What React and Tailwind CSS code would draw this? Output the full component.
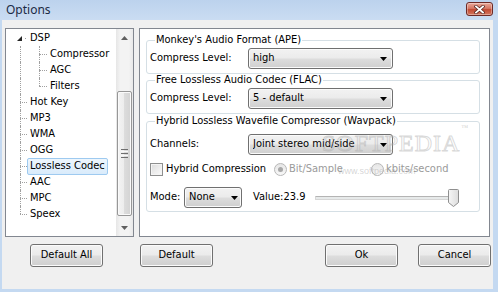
import React from "react";

const F = "font-['DejaVu_Sans_Condensed','Liberation_Sans',sans-serif]";

function Down({ w = 7, h = 4, color = "#000" }) {
  return (
    <svg width={w} height={h} viewBox={`0 0 ${w} ${h}`} className="block">
      <polygon points={`0,0 ${w},0 ${w / 2},${h}`} fill={color} />
    </svg>
  );
}
function Up({ w = 7, h = 4, color = "#000" }) {
  return (
    <svg width={w} height={h} viewBox={`0 0 ${w} ${h}`} className="block">
      <polygon points={`0,${h} ${w},${h} ${w / 2},0`} fill={color} />
    </svg>
  );
}

const btnBg =
  "bg-[linear-gradient(to_bottom,#f2f2f2_0%,#ebebeb_48%,#dddddd_52%,#cfcfcf_100%)]";

function Btn({ children, className = "" }) {
  return (
    <div
      className={`h-[23px] w-[73px] flex items-center justify-center rounded-[3px] border border-[#707070] ${btnBg} shadow-[inset_0_0_0_1px_#fbfbfb] ${className}`}
    >
      {children}
    </div>
  );
}

function Combo({ text, className = "", tri = "mr-[5px]" }) {
  return (
    <div
      className={`h-[21px] flex items-center rounded-[3px] border border-[#707070] ${btnBg} shadow-[inset_0_0_0_1px_#fbfbfb] pl-[4px] ${className}`}
    >
      <span className="truncate">{text}</span>
      <span className={`ml-auto ${tri}`}>
        <Down />
      </span>
    </div>
  );
}

const dot = "border-dotted border-[#a0a0a0]";

function Label({ text, selected }) {
  return (
    <span
      className={`h-[17px] flex items-center px-[2px] border rounded-[2px] whitespace-nowrap ${
        selected
          ? "border-[#9ecaf0] bg-[linear-gradient(to_bottom,#eef6fd,#d9ebfb)]"
          : "border-transparent"
      }`}
    >
      {text}
    </span>
  );
}

function Connector({ w, last, className = "" }) {
  return (
    <div className={`flex flex-col h-[16px] ${className}`} style={{ width: w }}>
      <div className={`h-[8px] border-l ${dot}`} />
      <div className={`h-[8px] border-t ${last ? "" : "border-l"} ${dot}`} />
    </div>
  );
}

function Tree() {
  const top = [
    { t: "Hot Key" },
    { t: "MP3" },
    { t: "WMA" },
    { t: "OGG" },
    { t: "Lossless Codec", sel: true },
    { t: "AAC" },
    { t: "MPC" },
    { t: "Speex", last: true },
  ];
  const kids = ["Compressor", "AGC", "Filters"];
  return (
    <div className="flex-1 flex flex-col pt-[1px]">
      <div className="h-[16px] flex items-center pl-[11px]">
        <svg width="5" height="5" viewBox="0 0 5 5" className="block">
          <polygon points="5,0 5,5 0,5" fill="#262626" />
        </svg>
        <div className="w-[5px] flex justify-end pr-[1px]">
          <div className="w-[1px] h-[1px] bg-[#a0a0a0]" />
        </div>
        <Label text="DSP" />
      </div>
      {kids.map((k, i) => (
        <div key={k} className="h-[16px] flex items-center pl-[14px]">
          <div className={`w-[19px] h-[16px] border-l ${dot}`} />
          <Connector w={8} last={i === kids.length - 1} />
          <Label text={k} />
        </div>
      ))}
      {top.map((r) => (
        <div key={r.t} className="h-[16px] flex items-center pl-[14px]">
          <Connector w={7} last={r.last} />
          <Label text={r.t} selected={r.sel} />
        </div>
      ))}
    </div>
  );
}

function Scrollbar() {
  return (
    <div className="w-[17px] flex flex-col bg-[linear-gradient(to_right,#e6e6e6,#f3f3f3_25%,#f3f3f3_75%,#e9e9e9)]">
      <div className="h-[17px] flex items-center justify-center">
        <Up w={7} h={4} color="#606060" />
      </div>
      <div className="mt-[45px] mx-[1px] h-[125px] rounded-[2px] border border-[#979797] bg-[linear-gradient(to_right,#f4f4f4,#ececec_50%,#dcdcdc_50%,#d3d3d3)] shadow-[inset_0_0_0_1px_#fafafa] flex flex-col items-center justify-center gap-[1px]">
        <div className="w-[7px] h-[1px] bg-[#6f6f6f]" />
        <div className="w-[7px] h-[1px] bg-[#f8f8f8]" />
        <div className="w-[7px] h-[1px] bg-[#6f6f6f]" />
        <div className="w-[7px] h-[1px] bg-[#f8f8f8]" />
        <div className="w-[7px] h-[1px] bg-[#6f6f6f]" />
      </div>
      <div className="mt-auto h-[17px] flex items-center justify-center">
        <Down w={7} h={4} color="#606060" />
      </div>
    </div>
  );
}

function Group({ title, children, className = "" }) {
  return (
    <fieldset
      className={`w-[334px] ml-[6px] border border-[#d5dfe5] rounded-[3px] px-[3px] ${className}`}
    >
      <legend className="ml-[5px] px-[1px] h-[12px] leading-[12px]">{title}</legend>
      {children}
    </fieldset>
  );
}

function Radio({ checked }) {
  return (
    <div className="w-[13px] h-[13px] rounded-full border border-[#b8b8b8] bg-[linear-gradient(to_bottom,#e6e6e6,#f8f8f8)] flex items-center justify-center">
      {checked && <div className="w-[5px] h-[5px] rounded-full bg-[#a8a8a8]" />}
    </div>
  );
}

export default function App() {
  return (
    <div
      className={`relative w-[498px] h-[292px] flex flex-col bg-[#c4d9f1] text-[11px] text-black ${F} overflow-hidden`}
    >
      {/* title bar */}
      <div className="h-[20px] flex items-start bg-[linear-gradient(to_bottom,#bcd2ed,#cadcf2)]">
        <span className="ml-[6px] mt-[1px] text-[12px] leading-[18px] font-['Noto_Sans',sans-serif] text-[#1b2a44]">
          Options
        </span>
        <div className="ml-auto mr-[5px] mt-[2px] w-[27px] h-[14px] rounded-[3px] border border-[#6d2a26] bg-[linear-gradient(to_bottom,#e9a99b,#d57764_45%,#c24a33_55%,#d4785f)] flex items-center justify-center shadow-[inset_0_0_0_1px_rgba(255,255,255,0.35)]">
          <svg width="11" height="9" viewBox="0 0 11 9" className="block">
            <path d="M2 1.5 L9 7.5 M9 1.5 L2 7.5" stroke="#5a2a24" strokeWidth="3.4" strokeLinecap="square" />
            <path d="M2 1.5 L9 7.5 M9 1.5 L2 7.5" stroke="#ffffff" strokeWidth="1.8" strokeLinecap="square" />
          </svg>
        </div>
      </div>

      {/* body */}
      <div className="flex-1 ml-[2px] mr-[5px] mb-[3px] bg-[#f0f0f0] flex flex-col pt-[8px] pl-[3px]">
        <div className="flex h-[209px] gap-[5px]">
          <div className="w-[129px] h-[209px] border border-[#828790] bg-white flex">
            <Tree />
            <Scrollbar />
          </div>
          <div className="w-[351px] h-[209px] border border-[#828790] bg-white flex flex-col">
            <Group title="Monkey's Audio Format (APE)" className="mt-[5px] pb-[4px]">
              <div className="mt-[2px] flex items-center">
                <span className="w-[98px]">Compress Level:</span>
                <Combo text="high" className="w-[145px]" />
              </div>
            </Group>
            <Group title="Free Lossless Audio Codec (FLAC)" className="pb-[4px]">
              <div className="mt-[2px] flex items-center">
                <span className="w-[98px]">Compress Level:</span>
                <Combo text="5 - default" className="w-[145px]" />
              </div>
            </Group>
            <Group
              title="Hybrid Lossless Wavefile Compressor (Wavpack)"
              className="mt-[1px] pb-[3px]"
            >
              <div className="mt-[7px] flex items-center">
                <span className="w-[98px]">Channels:</span>
                <Combo text="Joint stereo mid/side" className="w-[145px]" />
              </div>
              <div className="mt-[7px] h-[15px] flex items-center">
                <div className="w-[13px] h-[13px] border border-[#8e8f8f] bg-[linear-gradient(to_bottom_right,#dcdcdc,#fbfbfb)] shadow-[inset_0_0_0_1px_#f4f4f4]" />
                <span className="ml-[3px] w-[108px]">Hybrid Compression</span>
                <Radio checked />
                <span className="ml-[2px] w-[82px] text-[#9a9a9a]">Bit/Sample</span>
                <Radio />
                <span className="ml-[2px] text-[#9a9a9a]">kbits/second</span>
              </div>
              <div className="mt-[10px] flex items-center">
                <span className="w-[34px]">Mode:</span>
                <Combo text="None" className="w-[58px]" tri="mr-[3px]" />
                <span className="ml-[11px] w-[62px]">Value:23.9</span>
                <div className="relative w-[144px] h-[18px] flex items-center">
                  <div className="w-full h-[4px] border border-[#d6d6d6] border-t-[#b4b4b4] bg-[#e7eaea] rounded-[1px]" />
                  <svg
                    width="11"
                    height="18"
                    viewBox="0 0 11 18"
                    className="absolute right-0 top-0 block"
                  >
                    <defs>
                      <linearGradient id="th" x1="0" x2="1" y1="0" y2="0">
                        <stop offset="0" stopColor="#f6f6f6" />
                        <stop offset="1" stopColor="#dcdcdc" />
                      </linearGradient>
                    </defs>
                    <path
                      d="M1.5 0.5 H9.5 A1 1 0 0 1 10.5 1.5 V13.5 L5.5 17.5 L0.5 13.5 V1.5 A1 1 0 0 1 1.5 0.5 Z"
                      fill="url(#th)"
                      stroke="#8f8f8f"
                    />
                  </svg>
                </div>
              </div>
            </Group>
          </div>
        </div>
        <div className="mt-[7px] flex">
          <Btn className="ml-[25px]">Default All</Btn>
          <Btn className="ml-[37px]">Default</Btn>
          <Btn className="ml-[112px]">Ok</Btn>
          <Btn className="ml-[20px]">Cancel</Btn>
        </div>
      </div>

      {/* watermark */}
      <span className="absolute left-[322px] top-[131px] text-[24px] leading-[24px] tracking-[1px] font-['Liberation_Serif',serif] text-transparent [-webkit-text-stroke:1px_rgba(170,170,170,0.45)] pointer-events-none whitespace-nowrap">
        SOFTPEDIA
        <sup className="text-[7px] align-top ml-[1px] [-webkit-text-stroke:0] text-[rgba(160,160,160,0.5)]">™</sup>
      </span>
      <span className="absolute left-[338px] top-[165px] text-[9px] text-[rgba(160,160,160,0.45)] pointer-events-none font-['Liberation_Sans',sans-serif]">
        www.softpedia.com
      </span>
    </div>
  );
}
